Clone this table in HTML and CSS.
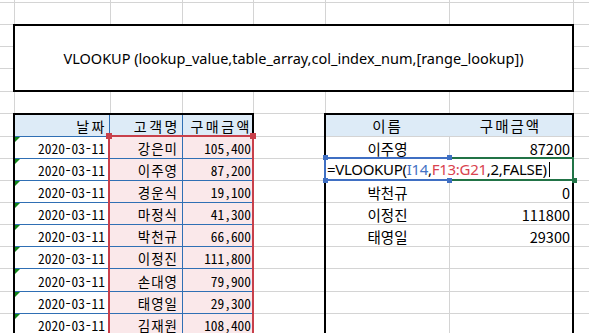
FILE: index.html
```html
<!DOCTYPE html>
<html lang="ko">
<head>
<meta charset="utf-8">
<link rel="stylesheet" href="styles.css">
</head>
<body>
<div class="sheet">
  <div class="title-box">VLOOKUP (lookup_value,table_array,col_index_num,[range_lookup])</div>

  <div class="sales">
    <div class="hd">날짜</div><div class="hd">고객명</div><div class="hd last">구매금액</div>
    <div class="date">2020-03-11</div><div class="name">강은미</div><div class="amt">105,400</div>
    <div class="date">2020-03-11</div><div class="name">이주영</div><div class="amt">87,200</div>
    <div class="date">2020-03-11</div><div class="name">경운식</div><div class="amt">19,100</div>
    <div class="date">2020-03-11</div><div class="name">마정식</div><div class="amt">41,300</div>
    <div class="date">2020-03-11</div><div class="name">박천규</div><div class="amt">66,600</div>
    <div class="date">2020-03-11</div><div class="name">이정진</div><div class="amt">111,800</div>
    <div class="date">2020-03-11</div><div class="name">손대영</div><div class="amt">79,900</div>
    <div class="date">2020-03-11</div><div class="name">태영일</div><div class="amt">29,300</div>
    <div class="date">2020-03-11</div><div class="name">김재원</div><div class="amt">108,400</div>
  </div>
  <div class="ref-range"></div>

  <div class="lookup">
    <div class="lhd">이름</div><div class="lhd">구매금액</div>
    <div class="lname">이주영</div><div class="lamt">87200</div>
    <div class="empty-row"></div>
    <div class="lname">박천규</div><div class="lamt">0</div>
    <div class="lname">이정진</div><div class="lamt">111800</div>
    <div class="lname">태영일</div><div class="lamt">29300</div>
  </div>

  <div class="edit">
    <div class="ref-box"></div>
    <div class="active-box"></div>
    <div class="editor">=VLOOKUP(<span class="c-blue">I14</span>,<span class="c-red">F13:G21</span>,2,FALSE)<span class="caret"></span></div>
  </div>
</div>
</body>
</html>
```

FILE: styles.css
```css
html, body {
  margin: 0;
  padding: 0;
  background: #fff;
}

.sheet {
  --g: linear-gradient(#d4d4d4, #d4d4d4);
  width: 589px;
  height: 333px;
  overflow: hidden;
  display: grid;
  grid-template-columns: 14px 96px 72px 71px 72px 124px 124px 1fr;
  grid-template-rows: 2px 22px 22px 22px 23px 22px 23px repeat(6, 22px) 23px 22px 22px;
  background-color: #fff;
  background-image: var(--g), var(--g), var(--g), var(--g), var(--g), var(--g), var(--g),
    var(--g), var(--g), var(--g), var(--g), var(--g), var(--g), var(--g), var(--g),
    var(--g), var(--g), var(--g), var(--g), var(--g), var(--g), var(--g);
  background-repeat: no-repeat;
  background-size: 1px 100%, 1px 100%, 1px 100%, 1px 100%, 1px 100%, 1px 100%, 1px 100%,
    100% 1px, 100% 1px, 100% 1px, 100% 1px, 100% 1px, 100% 1px, 100% 1px, 100% 1px,
    100% 1px, 100% 1px, 100% 1px, 100% 1px, 100% 1px, 100% 1px, 100% 1px;
  background-position: 14px 0, 110px 0, 182px 0, 253px 0, 325px 0, 449px 0, 573px 0,
    0 2px, 0 24px, 0 46px, 0 68px, 0 91px, 0 113px, 0 136px, 0 158px,
    0 180px, 0 202px, 0 224px, 0 246px, 0 268px, 0 291px, 0 313px;
  font-family: "Noto Sans CJK KR", sans-serif;
  color: #000;
}

/* title merged cell */
.title-box {
  grid-column: 2 / 8;
  grid-row: 3 / 6;
  margin: 0 -1px -1px -1px;
  border: 2px solid #000;
  background: #fff;
  display: flex;
  align-items: center;
  justify-content: center;
  font-family: "Noto Sans", sans-serif;
  font-size: 14.5px;
  padding-bottom: 1px;
}

/* left data table */
.sales {
  grid-column: 2 / 5;
  grid-row: 7 / 17;
  align-self: start;
  margin: 0 -1px;
  border: 2px solid #000;
  border-bottom: none;
  background: #fff;
  display: grid;
  grid-template-columns: 95px 73px 69px;
  grid-template-rows: repeat(7, 22px) 23px 22px 22px;
}
.sales > div {
  border-bottom: 1px solid #2f6fb4;
  display: flex;
  align-items: flex-end;
  justify-content: flex-end;
  white-space: nowrap;
  line-height: 18px;
  padding-bottom: 1px;
}
.sales .hd {
  background: #ddebf7;
  border-right: 1px solid #2f6fb4;
  font-size: 14px;
  letter-spacing: 2.5px;
  padding-right: 2px;
}
.sales .hd.last {
  border-right: none;
  padding-right: 0;
}
.sales .date {
  position: relative;
  font-family: "Noto Sans Mono CJK KR", "Liberation Mono", monospace;
  font-size: 13.4px;
  padding-right: 5px;
}
.sales .date::before {
  content: "";
  position: absolute;
  left: 0;
  top: 0;
  border-style: solid;
  border-width: 5px 5px 0 0;
  border-color: #13861a transparent transparent transparent;
}
.sales .name {
  background: #fae8ea;
  border-right: 1px solid #2f6fb4;
  font-size: 13.5px;
  letter-spacing: 1px;
  padding-right: 4px;
}
.sales .amt {
  background: #fae8ea;
  font-family: "Noto Sans Mono CJK KR", "Liberation Mono", monospace;
  font-size: 13.4px;
  padding-right: 1px;
}

/* red range highlight F13:G21 */
.ref-range {
  grid-column: 3 / 5;
  grid-row: 8 / 17;
  margin: -1px -1px 0 -2px;
  border: 2px solid #c8404b;
  position: relative;
}
.ref-range::before,
.ref-range::after {
  content: "";
  position: absolute;
  top: -4px;
  width: 6px;
  height: 6px;
  background: #c8404b;
}
.ref-range::before { left: -4px; }
.ref-range::after { right: -4px; }

/* right lookup table */
.lookup {
  grid-column: 6 / 8;
  grid-row: 7 / 17;
  margin: 0 -1px;
  border: 2px solid #000;
  border-bottom: none;
  display: grid;
  grid-template-columns: 123px 123px;
  grid-template-rows: repeat(7, 22px) 23px 22px 22px;
  align-content: start;
  font-size: 14.5px;
}
.lookup > div {
  display: flex;
  align-items: flex-end;
  white-space: nowrap;
  line-height: 20px;
}
.lhd {
  background: #ddebf7;
  justify-content: center;
  margin-bottom: 1px;
  letter-spacing: 2px;
}
.lname {
  justify-content: center;
}
.lamt {
  justify-content: flex-end;
  padding-right: 2px;
}
.empty-row {
  grid-column: 1 / -1;
}

/* cell being edited */
.edit {
  grid-column: 6 / 8;
  grid-row: 9 / 10;
  margin: -1px;
  position: relative;
  display: grid;
  grid-template-columns: 125px 125px;
}
.ref-box,
.active-box {
  grid-row: 1;
  position: relative;
}
.ref-box {
  grid-column: 1;
  border: 2px solid #3f6fc3;
}
.active-box {
  grid-column: 2;
  border: 2px solid #217346;
}
.ref-box::before {
  content: "";
  position: absolute;
  z-index: 2;
  left: -3px;
  top: -4px;
  width: 5px;
  height: 5px;
  background: #3f6fc3;
  box-shadow: 124px 0 0 #3f6fc3, 0 23px 0 #3f6fc3, 124px 23px 0 #3f6fc3;
}
.active-box::after {
  content: "";
  position: absolute;
  z-index: 2;
  right: -5px;
  bottom: -4px;
  width: 5px;
  height: 5px;
  background: #217346;
}
.editor {
  grid-column: 1 / -1;
  grid-row: 1;
  margin: 2px;
  position: relative;
  z-index: 1;
  background: #fff;
  font-family: "Noto Sans", sans-serif;
  font-size: 15px;
  letter-spacing: -0.3px;
  line-height: 20px;
  padding-left: 1px;
  white-space: nowrap;
  display: flex;
  align-items: center;
}
.c-blue { color: #4472c4; }
.c-red { color: #d9434f; }
.caret {
  display: inline-block;
  width: 1px;
  height: 15px;
  background: #000;
  margin-left: 2px;
}
```
